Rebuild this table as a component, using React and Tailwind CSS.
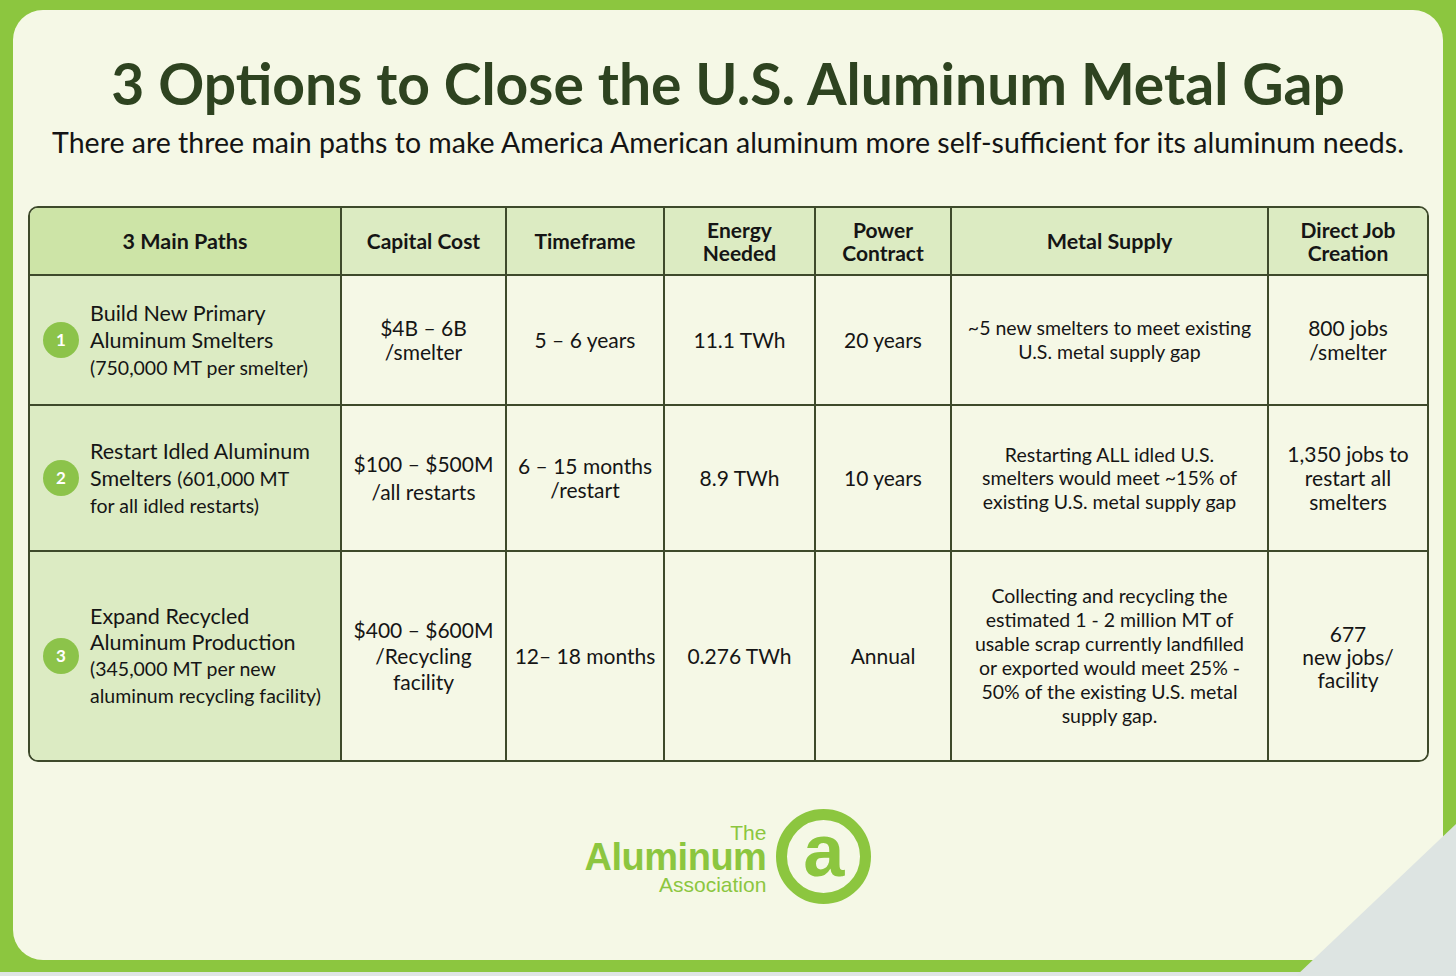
import React from "react";

const font = { fontFamily: "Lato, 'Open Sans', sans-serif" };

function Badge({ n }) {
  return (
    <div className="w-[36px] h-[36px] shrink-0 rounded-full bg-[#8cc34a] text-white font-bold text-[17px] flex items-center justify-center">
      {n}
    </div>
  );
}

function Cell({ children, className = "" }) {
  return (
    <div className={`flex items-center justify-center text-center text-[#151515] ${className}`}>
      {children}
    </div>
  );
}

export default function App() {
  const bl = "border-l-2 border-[#3e4a2b]";
  const bt = "border-t-2 border-[#3e4a2b]";
  return (
    <div style={font} className="relative w-[1456px] h-[976px] bg-[#8cc63f] overflow-hidden flex flex-col">
      <div className="mt-[10px] mx-[13px] h-[950px] bg-[#f5f8e6] rounded-[30px] flex flex-col">
        <h1 className="mt-[42px] text-center text-[57px] leading-[62px] font-bold text-[#2e4320]">
          3 Options to Close the U.S. Aluminum Metal Gap
        </h1>
        <p className="mt-[11px] text-center text-[28.5px] leading-[34px] text-[#141414]">
          There are three main paths to make America American aluminum more self-sufficient for its aluminum needs.
        </p>
        <div className="mt-[47px] ml-[15px] w-[1401px] h-[556px] border-2 border-[#3e4a2b] rounded-[10px] overflow-hidden grid grid-cols-[310px_165px_158px_151px_136px_317px_160px] grid-rows-[66px_130px_146px_210px]">
          {/* header */}
          <Cell className="bg-[#cde4a7] font-bold text-[21.5px] leading-[24px]">3 Main Paths</Cell>
          <Cell className={`bg-[#dcebc2] font-bold text-[21px] leading-[24px] ${bl}`}>Capital Cost</Cell>
          <Cell className={`bg-[#dcebc2] font-bold text-[21px] leading-[24px] ${bl}`}>Timeframe</Cell>
          <Cell className={`bg-[#dcebc2] font-bold text-[21px] leading-[23px] ${bl}`}>Energy<br />Needed</Cell>
          <Cell className={`bg-[#dcebc2] font-bold text-[21px] leading-[23px] ${bl}`}>Power<br />Contract</Cell>
          <Cell className={`bg-[#dcebc2] font-bold text-[21.5px] leading-[24px] ${bl}`}>Metal Supply</Cell>
          <Cell className={`bg-[#dcebc2] font-bold text-[21px] leading-[23px] ${bl}`}>Direct Job<br />Creation</Cell>

          {/* row 1 */}
          <div className={`bg-[#dcebc3] flex items-center pl-[13px] gap-[11px] ${bt}`}>
            <Badge n="1" />
            <div className="text-[21.5px] leading-[27px] text-[#151515] text-left">
              Build New Primary<br />Aluminum Smelters<br /><span className="text-[19.5px]">(750,000 MT per smelter)</span>
            </div>
          </div>
          <Cell className={`bg-[#f5f8e6] text-[21px] leading-[24px] ${bl} ${bt}`}>$4B – 6B<br />/smelter</Cell>
          <Cell className={`bg-[#f5f8e6] text-[21px] leading-[24px] ${bl} ${bt}`}>5 – 6 years</Cell>
          <Cell className={`bg-[#f5f8e6] text-[21px] leading-[24px] ${bl} ${bt}`}>11.1 TWh</Cell>
          <Cell className={`bg-[#f5f8e6] text-[21px] leading-[24px] ${bl} ${bt}`}>20 years</Cell>
          <Cell className={`bg-[#f5f8e6] text-[19.5px] leading-[24px] ${bl} ${bt}`}>~5 new smelters to meet existing<br />U.S. metal supply gap</Cell>
          <Cell className={`bg-[#f5f8e6] text-[21px] leading-[24px] ${bl} ${bt}`}>800 jobs<br />/smelter</Cell>

          {/* row 2 */}
          <div className={`bg-[#dcebc3] flex items-center pl-[13px] gap-[11px] ${bt}`}>
            <Badge n="2" />
            <div className="text-[21.5px] leading-[27px] text-[#151515] text-left">
              Restart Idled Aluminum<br />Smelters <span className="text-[19.5px]">(601,000 MT</span><br /><span className="text-[19.5px]">for all idled restarts)</span>
            </div>
          </div>
          <Cell className={`bg-[#f5f8e6] text-[21px] leading-[28px] ${bl} ${bt}`}>$100 – $500M<br />/all restarts</Cell>
          <Cell className={`bg-[#f5f8e6] text-[21px] leading-[24px] ${bl} ${bt}`}>6 – 15 months<br />/restart</Cell>
          <Cell className={`bg-[#f5f8e6] text-[21px] leading-[24px] ${bl} ${bt}`}>8.9 TWh</Cell>
          <Cell className={`bg-[#f5f8e6] text-[21px] leading-[24px] ${bl} ${bt}`}>10 years</Cell>
          <Cell className={`bg-[#f5f8e6] text-[19.5px] leading-[23.5px] ${bl} ${bt}`}>Restarting ALL idled U.S.<br />smelters would meet ~15% of<br />existing U.S. metal supply gap</Cell>
          <Cell className={`bg-[#f5f8e6] text-[21px] leading-[24px] ${bl} ${bt}`}>1,350 jobs to<br />restart all<br />smelters</Cell>

          {/* row 3 */}
          <div className={`bg-[#dcebc3] flex items-center pl-[13px] gap-[11px] ${bt}`}>
            <Badge n="3" />
            <div className="text-[21.5px] leading-[26px] text-[#151515] text-left">
              Expand Recycled<br />Aluminum Production<br /><span className="text-[19.5px]">(345,000 MT per new</span><br /><span className="text-[19.5px]">aluminum recycling facility)</span>
            </div>
          </div>
          <Cell className={`bg-[#f5f8e6] text-[21px] leading-[26px] ${bl} ${bt}`}>$400 – $600M<br />/Recycling<br />facility</Cell>
          <Cell className={`bg-[#f5f8e6] text-[21px] leading-[24px] ${bl} ${bt}`}>12– 18 months</Cell>
          <Cell className={`bg-[#f5f8e6] text-[21px] leading-[24px] ${bl} ${bt}`}>0.276 TWh</Cell>
          <Cell className={`bg-[#f5f8e6] text-[21px] leading-[24px] ${bl} ${bt}`}>Annual</Cell>
          <Cell className={`bg-[#f5f8e6] text-[19.5px] leading-[24px] ${bl} ${bt}`}>Collecting and recycling the<br />estimated 1 - 2 million MT of<br />usable scrap currently landfilled<br />or exported would meet 25% -<br />50% of the existing U.S. metal<br />supply gap.</Cell>
          <Cell className={`bg-[#f5f8e6] text-[21px] leading-[23px] ${bl} ${bt}`}>677<br />new jobs/<br />facility</Cell>
        </div>

        {/* logo */}
        <div className="mt-[47px] flex items-center justify-center gap-[10px] text-[#8cc63f]" style={{ fontFamily: "'Liberation Sans', Arial, sans-serif" }}>
          <div className="flex flex-col items-end pt-[8px]">
            <span className="text-[21px] leading-[16px]">The</span>
            <span className="text-[38px] leading-[32px] font-bold tracking-[-0.5px]">Aluminum</span>
            <span className="text-[21px] leading-[24px]">Association</span>
          </div>
          <div className="w-[95px] h-[95px] rounded-full border-[11px] border-[#8cc63f] flex items-center justify-center">
            <span className="text-[74px] leading-[74px] font-bold -mt-[12px]">a</span>
          </div>
        </div>
      </div>
      <div className="mt-auto h-[4px] bg-[#dfe5e3]" />
      <svg className="absolute right-0 bottom-0" width="160" height="152" viewBox="0 0 160 152">
        <polygon points="160,0 160,152 0,152" fill="#dde4e2" />
      </svg>
    </div>
  );
}
